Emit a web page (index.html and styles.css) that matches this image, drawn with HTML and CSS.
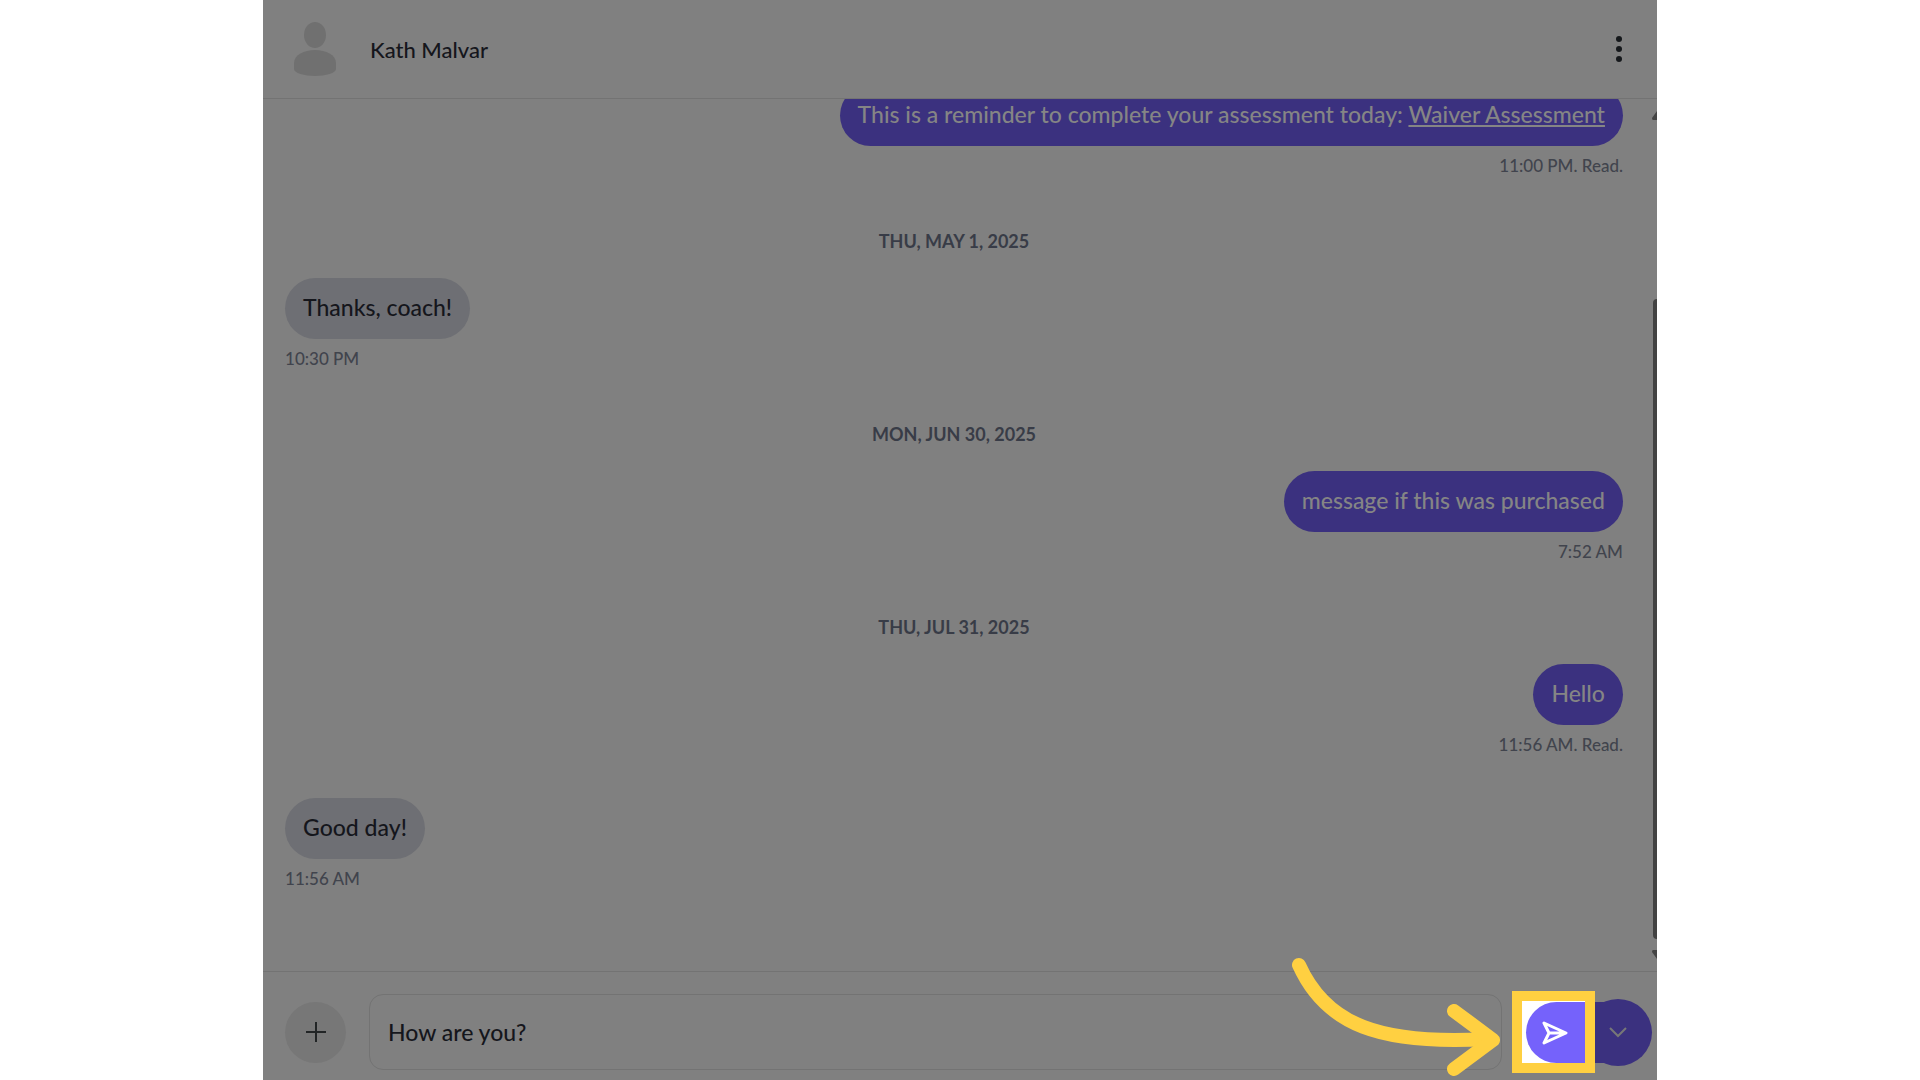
FILE: index.html
```
<!DOCTYPE html>
<html lang="en">
<head>
  <meta charset="utf-8">
  <title>Kath Malvar - Messages</title>
  <link rel="stylesheet" href="styles.css">
</head>
<body>
  <main class="chat">
    <header class="chat-header">
      <svg class="avatar" viewBox="0 0 44 56" aria-hidden="true">
        <ellipse cx="22" cy="14" rx="11" ry="13"/>
        <path d="M1 42C1 34 11 29 22 29s21 5 21 13v6c0 4-10 7-21 7S1 52 1 48z"/>
      </svg>
      <h1 class="chat-name">Kath Malvar</h1>
      <button class="menu-button" aria-label="Conversation options">
        <svg viewBox="0 0 8 28" width="8" height="28">
          <circle cx="4" cy="4" r="3"/><circle cx="4" cy="14" r="3"/><circle cx="4" cy="24" r="3"/>
        </svg>
      </button>
    </header>

    <section class="chat-body">
      <div class="messages">
        <p class="bubble sent">This is a reminder to complete your assessment today: <a href="#">Waiver Assessment</a></p>
        <p class="meta meta-sent">11:00 PM. Read.</p>
        <h2 class="date">THU, MAY 1, 2025</h2>
        <p class="bubble received">Thanks, coach!</p>
        <p class="meta">10:30 PM</p>
        <h2 class="date">MON, JUN 30, 2025</h2>
        <p class="bubble sent">message if this was purchased</p>
        <p class="meta meta-sent">7:52 AM</p>
        <h2 class="date">THU, JUL 31, 2025</h2>
        <p class="bubble sent">Hello</p>
        <p class="meta meta-sent">11:56 AM. Read.</p>
        <p class="bubble received reply">Good day!</p>
        <p class="meta">11:56 AM</p>
      </div>
      <div class="scrollbar" aria-hidden="true">
        <svg viewBox="0 0 5 10" width="5" height="10"><path d="M5 0v9H1q-1 0-1-2z"/></svg>
        <div class="thumb"></div>
        <svg viewBox="0 0 5 10" width="5" height="10"><path d="M5 10V1H1Q0 1 0 3z"/></svg>
      </div>
    </section>

    <form class="composer">
      <button type="button" class="add-button" aria-label="Add attachment">
        <svg viewBox="0 0 20 20" width="20" height="20"><path d="M10 0v20M0 10h20"/></svg>
      </button>
      <input class="message-input" type="text" value="How are you?" aria-label="Message">
      <div class="send-group">
        <div class="highlight">
          <button type="button" class="send-button" aria-label="Send">
            <svg viewBox="0 0 26 24" width="26" height="24"><path d="M2 2l22 10L2 22l5-10zM7 12h17"/></svg>
          </button>
        </div>
        <button type="button" class="options-button" aria-label="Send options">
          <svg viewBox="0 0 20 12" width="20" height="12"><path d="M2 2l8 8 8-8"/></svg>
        </button>
      </div>
      <!-- pointer to the send button -->
      <svg class="pointer" viewBox="0 0 212 126" aria-hidden="true">
        <path d="M11 12C38 72 92 92 199 86"/>
        <path d="M166 58l39 29-39 29"/>
      </svg>
    </form>
  </main>
</body>
</html>
```
FILE: styles.css
```
:root {
  --surface: #808080;
  --line: #737373;
  --text: #15161c;
  --muted: #41444d;
  --purple: #3b317f;
  --bright: #7562fb;
  --yellow: #ffd041;
}

* {
  box-sizing: border-box;
}

body {
  margin: 0;
  background: #fff;
  color: var(--text);
  font-family: Lato, "Liberation Sans", sans-serif;
  font-size: 23px;
  font-weight: 500;
}

h1, h2, p {
  margin: 0;
  font-weight: 500;
}

button {
  display: flex;
  align-items: center;
  justify-content: center;
  padding: 0;
  border: 0;
  cursor: pointer;
}

.chat {
  display: flex;
  flex-direction: column;
  width: 72.6%;
  height: 100vh;
  margin: 0 auto;
  background: var(--surface);
}

.chat-header {
  display: flex;
  align-items: center;
  padding: 21px 34px 21px 30px;
  border-bottom: 1px solid var(--line);
}

.avatar {
  width: 44px;
  height: 56px;
  fill: #707070;
}

.chat-name {
  margin-left: 33px;
  font-size: 22px;
}

.menu-button {
  margin-left: auto;
  background: none;
  fill: #15181b;
}

.chat-body {
  display: flex;
  flex: 1;
  min-height: 0;
}

.messages {
  display: flex;
  flex: 1;
  flex-direction: column;
  align-items: flex-start;
  justify-content: flex-end;
  padding: 0 29px 80px 22px;
  overflow: hidden;
}

.bubble {
  flex-shrink: 0;
  padding: 14px 18px 16px;
  border-radius: 31px;
  line-height: 31px;
}

.received {
  background: #6e6f74;
}

.sent {
  align-self: flex-end;
  background: var(--purple);
  color: #858585;
}

.sent a {
  color: inherit;
}

.meta {
  margin-top: 8px;
  color: var(--muted);
  font-size: 17px;
  line-height: 24px;
}

.meta-sent {
  align-self: flex-end;
}

.date {
  align-self: center;
  margin: 51px 0 25px;
  color: #383c47;
  font-size: 18px;
  font-weight: 700;
  line-height: 24px;
}

.reply {
  margin-top: 41px;
}

.scrollbar {
  display: flex;
  flex-direction: column;
  justify-content: space-between;
  width: 5px;
  padding: 12px 0 12px;
  fill: #454545;
}

.thumb {
  height: 640px;
  margin: auto 0 10px 1px;
  border-radius: 4px 0 0 4px;
  background: #424242;
}

.composer {
  position: relative;
  display: flex;
  align-items: center;
  padding: 19px 5px 7px 22px;
  border-top: 1px solid var(--line);
}

.add-button {
  width: 61px;
  height: 61px;
  border-radius: 50%;
  background: #777;
}

.add-button svg {
  stroke: #222526;
  stroke-width: 2;
}

.message-input {
  flex: 1;
  min-width: 0;
  height: 76px;
  margin: 0 10px 0 23px;
  padding: 0 18px;
  border: 1px solid var(--line);
  border-radius: 14px;
  background: transparent;
  color: var(--text);
  font: inherit;
}

.send-group {
  display: flex;
  align-items: center;
}

.highlight {
  z-index: 1;
  width: 83px;
  height: 82px;
  padding: 1px 0 0 4px;
  border: 10px solid var(--yellow);
  background: #fff;
}

.send-button {
  width: 100%;
  height: 100%;
  border-radius: 31px 0 0 31px;
  background: var(--bright);
}

.send-button svg {
  fill: none;
  stroke: #fff;
  stroke-width: 3;
  stroke-linejoin: round;
}

.options-button {
  position: relative;
  width: 68px;
  height: 67px;
  margin-left: -11px;
  border-radius: 50%;
  background: var(--purple);
}

/* flat edge that joins the round button to the send button */
.options-button::before {
  content: "";
  position: absolute;
  top: 3px;
  bottom: 3px;
  left: 0;
  width: 34px;
  background: var(--purple);
}

.options-button svg {
  position: relative;
  fill: none;
  stroke: #777;
  stroke-width: 2;
}

.pointer {
  position: absolute;
  right: 157px;
  bottom: 1px;
  width: 212px;
  height: 126px;
  fill: none;
  stroke: var(--yellow);
  stroke-width: 14;
  stroke-linecap: round;
  stroke-linejoin: round;
  pointer-events: none;
}
```
